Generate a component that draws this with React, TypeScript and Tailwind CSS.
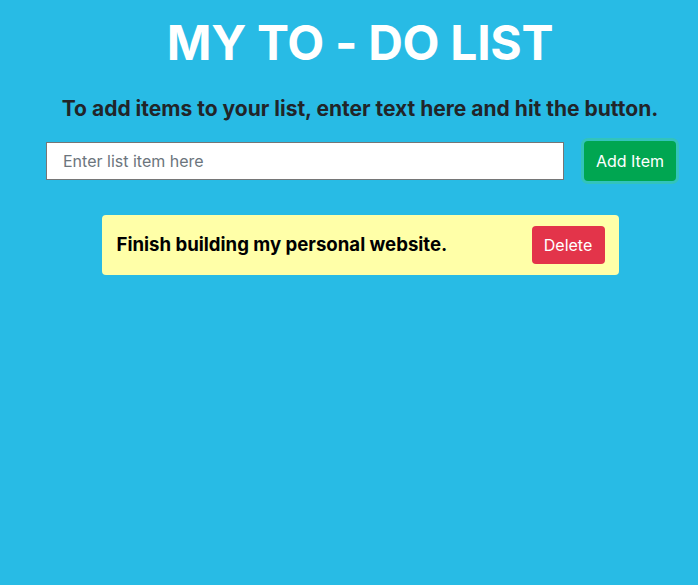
import { useState } from 'react'

const App = () => {
    const [items] = useState<string[]>(['Finish building my personal website.'])

    return (
        <div
            className="min-h-[585px] w-full bg-[#28bbe5] text-[#212529]"
            style={{ fontFamily: 'Inter, "Liberation Sans", sans-serif' }}
        >
            <div className="flex flex-col items-center pl-[22px] pt-[14px]">
                <h1 className="text-[48px] leading-[58px] font-bold text-white tracking-[-0.3px]">
                    MY TO - DO LIST
                </h1>
                <h2 className="mt-[23px] text-[21px] leading-[28px] font-bold text-[#212529]">
                    To add items to your list, enter text here and hit the button.
                </h2>
                <div className="mt-[18px] flex items-center gap-[20px] self-start pl-[24px]">
                    <input
                        className="h-[38px] w-[518px] border border-[#767676] bg-white px-4 text-[16px] text-[#495057] placeholder:text-[#6c757d] outline-none"
                        placeholder="Enter list item here"
                    />
                    <button className="h-[40px] w-[92px] rounded-[4px] bg-[#00a651] text-[16px] text-white ring-[3px] ring-[#38c9a0]/60">
                        Add Item
                    </button>
                </div>
                <ul className="mt-[34px] flex flex-col gap-3">
                    {items.map((item) => (
                        <li
                            key={item}
                            className="flex h-[60px] w-[517px] items-center justify-between rounded-[4px] bg-[#ffffa8] pl-[15px] pr-[14px]"
                        >
                            <span className="text-[18.6px] font-bold text-black">{item}</span>
                            <button className="h-[38px] w-[73px] rounded-[4px] bg-[#e3344a] text-[16px] text-white">
                                Delete
                            </button>
                        </li>
                    ))}
                </ul>
            </div>
        </div>
    )
}

export default App
